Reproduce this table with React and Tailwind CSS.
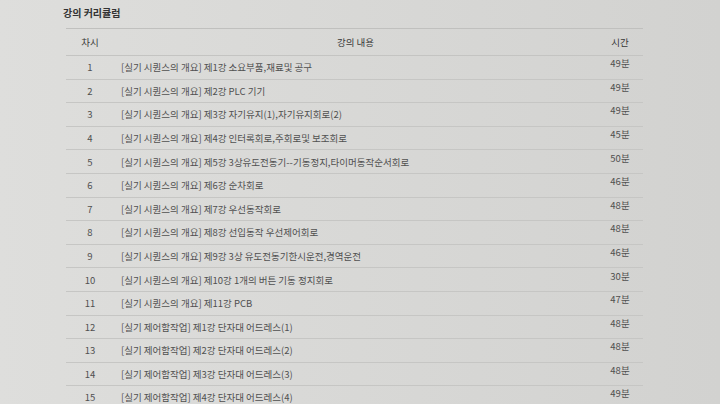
import React from "react";

const rows = [
  ["[실기 시퀀스의 개요] 제1강 소요부품,재료및 공구", "49분"],
  ["[실기 시퀀스의 개요] 제2강 PLC 기기", "49분"],
  ["[실기 시퀀스의 개요] 제3강 자기유지(1),자기유지회로(2)", "49분"],
  ["[실기 시퀀스의 개요] 제4강 인터록회로,주회로및 보조회로", "45분"],
  ["[실기 시퀀스의 개요] 제5강 3상유도전동기--기동정지,타이머동작순서회로", "50분"],
  ["[실기 시퀀스의 개요] 제6강 순차회로", "46분"],
  ["[실기 시퀀스의 개요] 제7강 우선동작회로", "48분"],
  ["[실기 시퀀스의 개요] 제8강 선입동작 우선제어회로", "48분"],
  ["[실기 시퀀스의 개요] 제9강 3상 유도전동기한시운전,경역운전", "46분"],
  ["[실기 시퀀스의 개요] 제10강 1개의 버튼 기동 정지회로", "30분"],
  ["[실기 시퀀스의 개요] 제11강 PCB", "47분"],
  ["[실기 제어함작업] 제1강 단자대 어드레스(1)", "48분"],
  ["[실기 제어함작업] 제2강 단자대 어드레스(2)", "48분"],
  ["[실기 제어함작업] 제3강 단자대 어드레스(3)", "48분"],
  ["[실기 제어함작업] 제4강 단자대 어드레스(4)", "49분"],
];

export default function App() {
  return (
    <div
      className="w-[720px] h-[404px] overflow-hidden bg-gradient-to-r from-[#dededc] to-[#d2d2d0] pl-[63px] pt-[6px] text-[#505050]"
      style={{ fontFamily: '"Noto Sans CJK KR", "Noto Sans", sans-serif' }}
    >
      <h2 className="text-[10px] font-bold text-[#333] leading-[14px]">강의 커리큘럼</h2>
      <div className="mt-[8px] ml-[3px] w-[577px] border-t border-[#c0c0be]">
        <div className="flex h-[27px] items-center border-b border-[#c4c4c2] text-[9.5px] text-[#383838]">
          <div className="w-[48px] text-center">차시</div>
          <div className="flex-1 text-center">강의 내용</div>
          <div className="w-[46px] text-center">시간</div>
        </div>
        {rows.map(([title, time], i) => (
          <div
            key={i}
            className="flex h-[23.6px] items-center border-b border-[#c6c6c4] text-[9.5px]"
          >
            <div className="w-[48px] text-center">{i + 1}</div>
            <div className="flex-1 pl-[7px]">{title}</div>
            <div className="w-[46px] text-center -translate-y-[4px]">{time}</div>
          </div>
        ))}
      </div>
    </div>
  );
}
